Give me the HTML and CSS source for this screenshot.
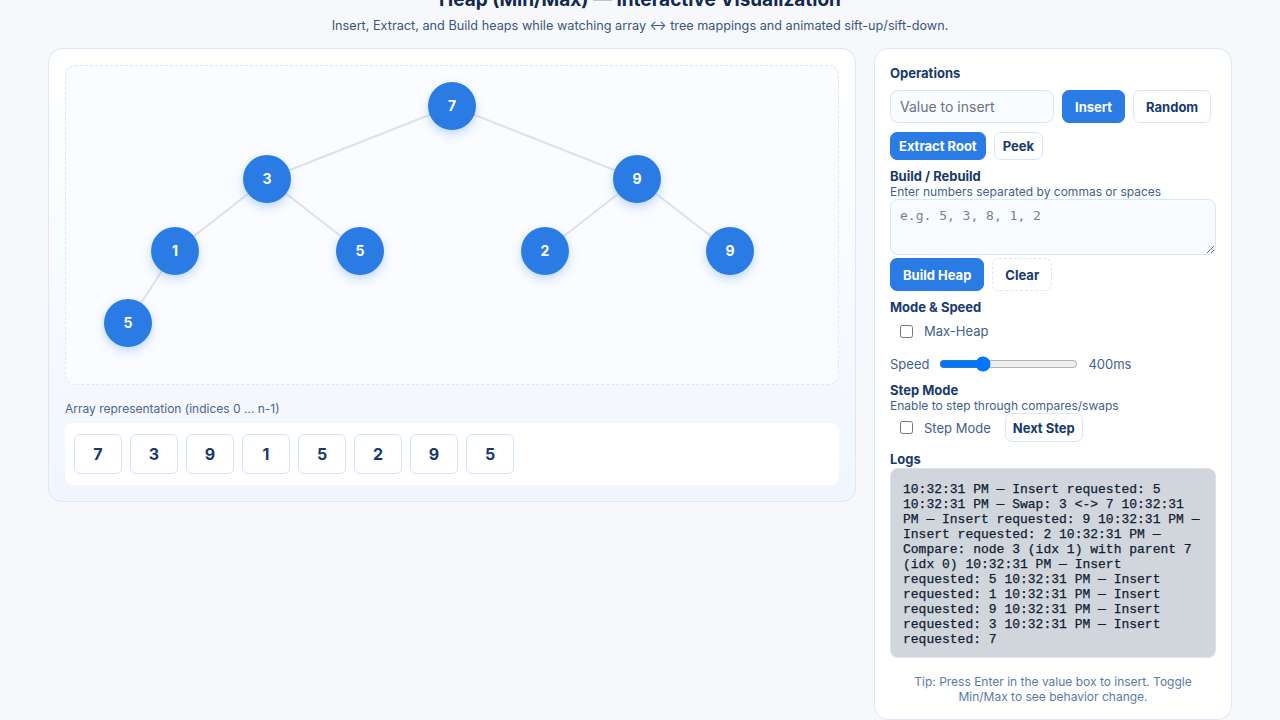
FILE: index.html
```html
<!DOCTYPE html>
<html lang="en">
<head>
<meta charset="utf-8">
<title>Heap (Min/Max) — Interactive Visualization</title>
<link rel="stylesheet" href="styles.css">
</head>
<body>
<header class="page-head">
  <h1 class="title">Heap (Min/Max) — Interactive Visualization</h1>
  <p class="subtitle">Insert, Extract, and Build heaps while watching array ↔ tree mappings and animated sift-up/sift-down.</p>
</header>
<main class="layout">
  <section class="viz-card">
    <div class="tree-canvas">
      <svg class="tree-svg" width="772" height="319" viewBox="0 0 772 319">
        <defs>
          <filter id="glow" x="-50%" y="-50%" width="200%" height="200%">
            <feDropShadow dx="0" dy="4" stdDeviation="5" flood-color="#2a7be4" flood-opacity="0.28"/>
          </filter>
        </defs>
        <g class="edges">
          <line x1="386" y1="40" x2="201" y2="113"/>
          <line x1="386" y1="40" x2="571" y2="113"/>
          <line x1="201" y1="113" x2="109" y2="185"/>
          <line x1="201" y1="113" x2="294" y2="185"/>
          <line x1="571" y1="113" x2="479" y2="185"/>
          <line x1="571" y1="113" x2="664" y2="185"/>
          <line x1="109" y1="185" x2="62" y2="257"/>
        </g>
        <g class="nodes">
          <g><circle cx="386" cy="40" r="24"/><text x="386" y="45">7</text></g>
          <g><circle cx="201" cy="113" r="24"/><text x="201" y="118">3</text></g>
          <g><circle cx="571" cy="113" r="24"/><text x="571" y="118">9</text></g>
          <g><circle cx="109" cy="185" r="24"/><text x="109" y="190">1</text></g>
          <g><circle cx="294" cy="185" r="24"/><text x="294" y="190">5</text></g>
          <g><circle cx="479" cy="185" r="24"/><text x="479" y="190">2</text></g>
          <g><circle cx="664" cy="185" r="24"/><text x="664" y="190">9</text></g>
          <g><circle cx="62" cy="257" r="24"/><text x="62" y="262">5</text></g>
        </g>
      </svg>
    </div>
    <div class="array-label">Array representation (indices 0 … n-1)</div>
    <div class="array-row">
      <div class="cell">7</div>
      <div class="cell">3</div>
      <div class="cell">9</div>
      <div class="cell">1</div>
      <div class="cell">5</div>
      <div class="cell">2</div>
      <div class="cell">9</div>
      <div class="cell">5</div>
    </div>
  </section>

  <aside class="panel">
    <h3 class="sec-title">Operations</h3>
    <div class="row row-insert">
      <input class="value-input" type="text" placeholder="Value to insert">
      <button class="btn btn-primary btn-tall">Insert</button>
      <button class="btn btn-tall">Random</button>
    </div>
    <div class="row row-ops">
      <button class="btn btn-primary">Extract Root</button>
      <button class="btn">Peek</button>
    </div>

    <h3 class="sec-title sec-build">Build / Rebuild</h3>
    <div class="hint">Enter numbers separated by commas or spaces</div>
    <textarea class="build-input" placeholder="e.g. 5, 3, 8, 1, 2"></textarea>
    <div class="row row-build">
      <button class="btn btn-primary btn-tall">Build Heap</button>
      <button class="btn btn-tall btn-dashed">Clear</button>
    </div>

    <h3 class="sec-title sec-mode">Mode &amp; Speed</h3>
    <label class="check-row"><input type="checkbox"> <span>Max-Heap</span></label>
    <div class="speed-row">
      <span class="speed-label">Speed</span>
      <input class="speed" type="range" min="50" max="1250" value="400">
      <span class="speed-val">400ms</span>
    </div>

    <h3 class="sec-title sec-step">Step Mode</h3>
    <div class="hint">Enable to step through compares/swaps</div>
    <div class="step-row">
      <label class="check-row check-inline"><input type="checkbox"> <span>Step Mode</span></label>
      <button class="btn btn-step">Next Step</button>
    </div>

    <h3 class="sec-title sec-logs">Logs</h3>
    <div class="logs">10:32:31 PM — Insert requested: 5 10:32:31 PM — Swap: 3 &lt;-&gt; 7 10:32:31 PM — Insert requested: 9 10:32:31 PM — Insert requested: 2 10:32:31 PM — Compare: node 3 (idx 1) with parent 7 (idx 0) 10:32:31 PM — Insert requested: 5 10:32:31 PM — Insert requested: 1 10:32:31 PM — Insert requested: 9 10:32:31 PM — Insert requested: 3 10:32:31 PM — Insert requested: 7</div>
    <p class="tip">Tip: Press Enter in the value box to insert. Toggle Min/Max to see behavior change.</p>
  </aside>
</main>
</body>
</html>
```

FILE: styles.css
```css
* { box-sizing: border-box; }

html, body {
  margin: 0;
  padding: 0;
  background: #f6f8fc;
  font-family: Inter, "Noto Sans", "Liberation Sans", sans-serif;
  color: #173a6e;
  overflow: hidden;
}

.page-head {
  text-align: center;
  margin-top: -14px;
}

.title {
  margin: 0;
  font-size: 19px;
  line-height: 28px;
  font-weight: 700;
  color: #10294d;
}

.subtitle {
  margin: 3px 0 0;
  font-size: 12.7px;
  line-height: 18px;
  color: #3a5580;
}

.layout {
  width: 1183px;
  margin: 13px 0 0 48px;
  display: grid;
  grid-template-columns: 1fr 358px;
  gap: 18px;
  align-items: start;
}

.viz-card {
  background: linear-gradient(180deg, #ffffff 0%, #f1f6fe 100%);
  border: 1px solid #dbe8fb;
  border-radius: 14px;
  padding: 16px;
}

.tree-canvas {
  height: 320px;
  border: 1px dashed #dde7f5;
  border-radius: 10px;
  background: #fafcff;
  overflow: hidden;
}

.tree-svg { display: block; }

.edges line {
  stroke: #dde1e8;
  stroke-width: 2;
}

.nodes circle {
  fill: #2a7be4;
  filter: url(#glow);
}

.nodes text {
  fill: #ffffff;
  font-family: Inter, "Noto Sans", sans-serif;
  font-weight: 700;
  font-size: 14px;
  text-anchor: middle;
}

.array-label {
  margin-top: 16px;
  font-size: 12px;
  line-height: 15px;
  color: #4a6590;
}

.array-row {
  margin-top: 7px;
  background: #ffffff;
  border-radius: 8px;
  padding: 11px 9px;
  display: flex;
  gap: 8px;
}

.cell {
  width: 48px;
  height: 40px;
  border: 1px solid #d3e3fa;
  border-radius: 6px;
  background: #ffffff;
  display: flex;
  align-items: center;
  justify-content: center;
  font-size: 16px;
  font-weight: 700;
  color: #173a6e;
}

.panel {
  background: #ffffff;
  border: 1px solid #dbe8fb;
  border-radius: 14px;
  padding: 16px 15px 15px;
  display: flex;
  flex-direction: column;
  align-items: stretch;
}

.sec-title {
  margin: 0;
  font-size: 13px;
  line-height: 16px;
  font-weight: 700;
  color: #173a6e;
}

.sec-build { margin-top: 8px; }
.sec-mode { margin-top: 8px; }
.sec-step { margin-top: 8px; }
.sec-logs { margin-top: 9px; }

.hint {
  font-size: 12px;
  line-height: 15px;
  color: #3f5f8f;
}

.row {
  display: flex;
  gap: 8px;
  align-items: stretch;
}

.row-insert { margin-top: 9px; }
.row-ops { margin-top: 9px; }
.row-build { margin-top: 3px; }

.value-input {
  width: 164px;
  height: 33px;
  border: 1px solid #d6e6fb;
  border-radius: 8px;
  background: #f8fbff;
  padding: 0 9px;
  font-family: Inter, "Noto Sans", sans-serif;
  font-size: 14px;
  color: #173a6e;
}

.value-input::placeholder { color: #6b7280; }

.btn {
  font-family: Inter, "Noto Sans", sans-serif;
  font-size: 13px;
  font-weight: 700;
  height: 28px;
  padding: 0 8px;
  border: 1px solid #d6e6fb;
  border-radius: 7px;
  background: #ffffff;
  color: #173a6e;
  cursor: pointer;
}

.btn-tall {
  height: 33px;
  padding: 0 12px;
}

.btn-primary {
  background: #2a7be4;
  border-color: #2a7be4;
  color: #ffffff;
}

.btn-dashed {
  border-style: dashed;
}

.btn-step {
  height: 29px;
  padding: 0 7px;
}

.build-input {
  margin-top: 0;
  width: 100%;
  height: 56px;
  border: 1px solid #d6e6fb;
  border-radius: 8px;
  background: #f8fbff;
  padding: 8px 9px;
  font-family: "DejaVu Sans Mono", "Liberation Mono", monospace;
  font-size: 13px;
  line-height: 16px;
  color: #173a6e;
  resize: vertical;
  display: block;
}

.build-input::placeholder { color: #7a7f87; }

.check-row {
  display: flex;
  align-items: center;
  gap: 11px;
  padding-left: 10px;
  font-size: 13px;
  line-height: 20px;
  color: #3f5f8f;
}

.check-row input {
  margin: 0;
  width: 13px;
  height: 13px;
}

.sec-mode + .check-row { margin-top: 6px; }

.speed-row {
  margin-top: 13px;
  display: flex;
  align-items: center;
  gap: 10px;
  font-size: 13px;
  line-height: 20px;
  color: #3f5f8f;
}

.speed {
  width: 139px;
  margin: 0;
}

.step-row {
  display: flex;
  align-items: center;
  gap: 14px;
}

.logs {
  margin-top: 1px;
  background: #d1d5dc;
  border: 1px solid #dbe3ef;
  border-radius: 8px;
  padding: 13px 12px 12px 12px;
  height: 190px;
  font-family: "Liberation Mono", "Courier New", monospace;
  font-size: 13px;
  line-height: 15px;
  color: #0f1d33;
  font-weight: 400;
  -webkit-text-stroke: 0.25px #0f1d33;
}

.tip {
  margin: 16px 0 0;
  text-align: center;
  font-size: 12px;
  line-height: 15px;
  color: #5a7aa8;
}
```
